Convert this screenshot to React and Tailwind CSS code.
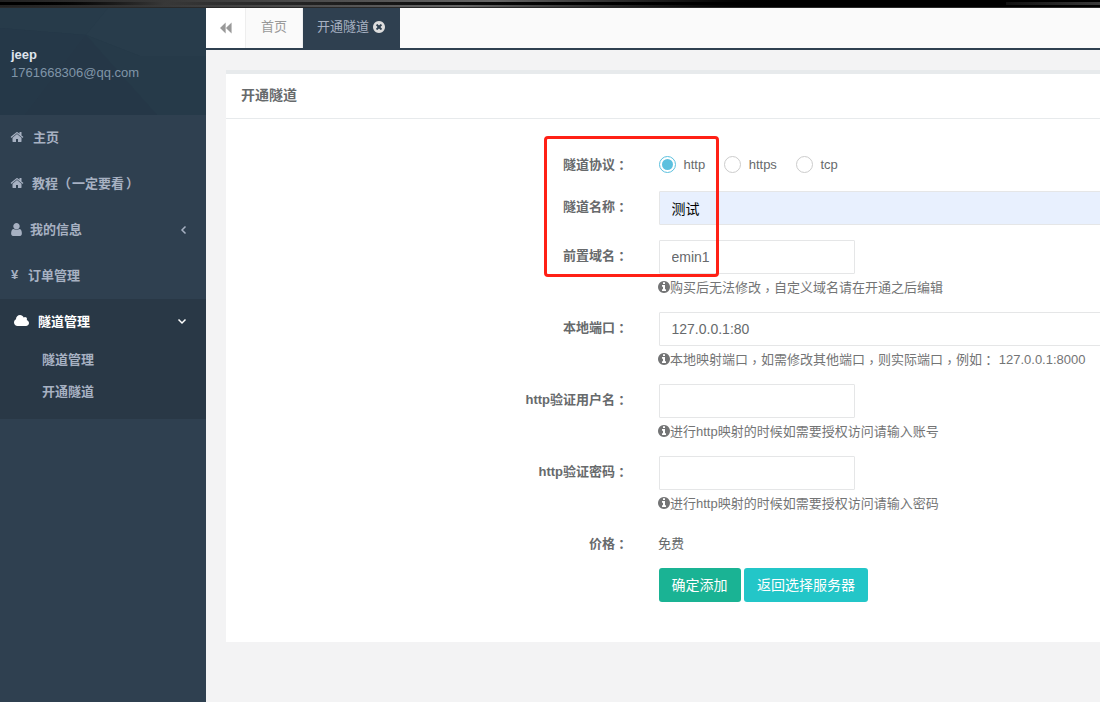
import { useState } from "react";

const icons = {
  home: "M1472 992v480q0 26-19 45t-45 19h-384v-384h-256v384h-384q-26 0-45-19t-19-45v-480q0-1 .5-3t.5-3l575-474 575 474q1 2 1 6zm223-69l-62 74q-8 9-21 11h-3q-13 0-21-7l-692-577-692 577q-12 8-24 7-13-2-21-11l-62-74q-8-10-7-23.5t11-21.5l719-599q32-26 76-26t76 26l244 204v-195q0-14 9-23t23-9h192q14 0 23 9t9 23v408l219 182q10 8 11 21.5t-7 23.5z",
  user: "M1536 1399q0 109-62.5 187t-150.5 78h-854q-88 0-150.5-78t-62.5-187q0-85 8.5-160.5t31.5-152 58.5-131 94-89 134.5-34.5q131 128 313 128t313-128q76 0 134.5 34.5t94 89 58.5 131 31.5 152 8.5 160.5zm-256-887q0 159-112.5 271.5t-271.5 112.5-271.5-112.5-112.5-271.5 112.5-271.5 271.5-112.5 271.5 112.5 112.5 271.5z",
  cloud: "M1856 1152q0 159-112.5 271.5t-271.5 112.5h-1088q-185 0-316.5-131.5t-131.5-316.5q0-132 71-241.5t187-163.5q-2-28-2-43 0-212 150-362t362-150q158 0 286.5 88t187.5 230q70-62 166-62 106 0 181 75t75 181q0 75-41 138 129 30 213 134.5t84 239.5z",
  info: "M1152 1376v-160q0-14-9-23t-23-9h-96v-512q0-14-9-23t-23-9h-320q-14 0-23 9t-9 23v160q0 14 9 23t23 9h96v320h-96q-14 0-23 9t-9 23v160q0 14 9 23t23 9h448q14 0 23-9t9-23zm-128-896v-160q0-14-9-23t-23-9h-192q-14 0-23 9t-9 23v160q0 14 9 23t23 9h192q14 0 23-9t9-23zm640 416q0 209-103 385.5t-279.5 279.5-385.5 103-385.5-103-279.5-279.5-103-385.5 103-385.5 279.5-279.5 385.5-103 385.5 103 279.5 279.5 103 385.5z",
  close: "M1277 1122q0-26-19-45l-181-181 181-181q19-19 19-45 0-27-19-46l-90-90q-19-19-46-19-26 0-45 19l-181 181-181-181q-19-19-45-19-27 0-46 19l-90 90q-19 19-19 46 0 26 19 45l181 181-181 181q-19 19-19 45 0 27 19 46l90 90q19 19 46 19 26 0 45-19l181-181 181 181q19 19 45 19 27 0 46-19l90-90q19-19 19-46zm387-226q0 209-103 385.5t-279.5 279.5-385.5 103-385.5-103-279.5-279.5-103-385.5 103-385.5 279.5-279.5 385.5-103 385.5 103 279.5 279.5 103 385.5z",
  backward: "M850 200v1392L130 896zM1610 200v1392L890 896z",
};

const Icon = ({ name, className, box = "0 0 1792 1792" }) => (
  <svg viewBox={box} fill="currentColor" className={`shrink-0 ${className}`}>
    <path d={icons[name]} />
  </svg>
);

const Chevron = ({ points, className = "" }) => (
  <svg viewBox="0 0 10 10" fill="none" stroke="currentColor" strokeWidth="1.5" className={`ml-auto size-[10px] ${className}`}>
    <polyline points={points} />
  </svg>
);

// Full-width punctuation sits in the middle of its box in the TC font
const Text = ({ children, className = "" }) => (
  <span className={className}>
    {children.split(/([：，])/).map((part, i) =>
      i % 2 ? (
        <span key={i} className={`font-['Noto_Sans_CJK_TC',sans-serif] leading-none ${part === "，" ? "align-[-3px]" : "align-[-1px]"}`}>
          {part}
        </span>
      ) : part
    )}
  </span>
);

function Sidebar() {
  return (
    <aside className="w-[206px] shrink-0 bg-[#2f4050] text-[13px] font-semibold text-[#a7b1c2]">
      <div className="relative h-[107px] bg-[#263949]">
        <svg viewBox="0 0 206 107" className="absolute inset-0 h-full w-full">
          <polygon points="0,0 108,0 86,27 0,20" fill="#273b4a" />
          <polygon points="108,0 206,0 206,48 140,48 86,27" fill="#283c4b" />
          <polygon points="0,20 86,27 25,107 0,107" fill="#253848" />
          <polygon points="86,27 157,107 25,107" fill="#253747" />
          <polygon points="86,27 140,48 206,48 206,107 157,107" fill="#263a49" />
        </svg>
        <div className="relative pt-[38px] pl-[11px]">
          <div className="leading-[18px] font-bold text-[#dfe4ed]">jeep</div>
          <div className="leading-[18px] font-normal text-[#8095a8]">1761668306@qq.com</div>
        </div>
      </div>

      <nav>
        <a className="flex h-[46px] items-center pr-5 pb-[2px] pl-[10px]">
          <Icon name="home" className="mr-[9px] size-[14px]" />
          <span className="pt-[2px]">主页</span>
        </a>
        <a className="flex h-[46px] items-center pr-5 pb-[2px] pl-[10px]">
          <Icon name="home" className="mr-[8px] size-[14px]" />
          <span className="flex pt-[2px]">
            教程<span className="mr-px">（</span>一定要看<span className="pl-[2px]">）</span>
          </span>
        </a>
        <a className="flex h-[46px] items-center pr-[17px] pb-[2px] pl-[9px]">
          <Icon name="user" className="mr-[6px] size-[15px]" />
          <span className="pt-[2px]">我的信息</span>
          <Chevron points="6.5,1.5 3,5 6.5,8.5" className="mt-[2px]" />
        </a>
        <a className="flex h-[46px] items-center pr-5 pb-[2px] pl-[11px]">
          <span className="mr-[9px] w-2 text-[13px] font-bold">¥</span>
          <span className="pt-[2px]">订单管理</span>
        </a>

        {/* Open group */}
        <div className="h-[120px] bg-[#293846]">
          <a className="flex h-[46px] items-center pr-[19px] pb-[2px] pl-[14px] text-white">
            <Icon name="cloud" box="-64 0 1920 1792" className="mr-[9px] h-[14px] w-[15px]" />
            <span className="pt-[2px]">隧道管理</span>
            <Chevron points="1.5,3.5 5,7 8.5,3.5" />
          </a>
          <a className="block h-8 pl-[42px] leading-[30px]">隧道管理</a>
          <a className="block h-8 pl-[42px] leading-[30px]">开通隧道</a>
        </div>
      </nav>
    </aside>
  );
}

function Tabs() {
  return (
    <div className="flex h-[42px] border-b-2 border-[#2f4050] bg-[#fafafa] text-[13px] leading-[38px] text-[#999999]">
      <button className="flex w-10 items-center justify-center border-r border-[#eeeeee] bg-white">
        <Icon name="backward" className="size-[14px]" />
      </button>
      <a className="w-[57px] border-r border-[#eeeeee] text-center">首页</a>
      <a className="flex w-[97px] items-center bg-[#2f4050] pb-[2px] pl-[14px] text-[#a7b1c2]">
        <span>开通隧道</span>
        <Icon name="close" className="ml-[3px] size-[14px] text-[#dddddd]" />
      </a>
    </div>
  );
}

const Field = ({ label, labelClass = "", className = "", children }) => (
  <div className={`flex ${className}`}>
    <label className={`w-[402px] shrink-0 text-right leading-[18px] font-bold ${labelClass}`}>
      {label && <Text>{label}</Text>}
    </label>
    <div className="ml-[31px] shrink-0">{children}</div>
  </div>
);

const Help = ({ children }) => (
  <p className="mt-1 -ml-[2px] flex h-[18px] items-center whitespace-pre text-[#737475]">
    <Icon name="info" className="size-[14px]" />
    <Text className="-ml-px pt-[2px]">{children}</Text>
  </p>
);

const inputClass = "block h-[34px] rounded-[1px] border border-[#e5e6e7] px-[11.5px] text-[14px] outline-none";

function TunnelForm() {
  const [protocol, setProtocol] = useState("http");

  return (
    <form className="relative h-[523px] pt-9" onSubmit={(e) => e.preventDefault()}>
      <Field label="隧道协议：" labelClass="pt-px" className="h-9">
        <div className="flex h-[18px] items-center">
          {["http", "https", "tcp"].map((p) => (
            <label key={p} className="mr-[19px] flex items-center gap-[7.5px]" onClick={() => setProtocol(p)}>
              <span className={`flex size-[17px] items-center justify-center rounded-full border ${protocol === p ? "border-[#5bc0de]" : "border-[#cccccc]"}`}>
                {protocol === p && <span className="size-[11px] rounded-full bg-[#5bc0de]" />}
              </span>
              <span className="pt-[2px]">{p}</span>
            </label>
          ))}
        </div>
      </Field>
      <Field label="隧道名称：" labelClass="pt-[7px]" className="h-[49px]">
        <input className={`${inputClass} w-[590px] bg-[#e8f0fe] text-black`} defaultValue="测试" />
      </Field>
      <Field label="前置域名：" labelClass="pt-[7px]" className="h-[72px]">
        <input className={`${inputClass} w-[196px]`} defaultValue="emin1" />
        <Help>购买后无法修改，自定义域名请在开通之后编辑</Help>
      </Field>
      <Field label="本地端口：" labelClass="pt-[7px]" className="h-[72px]">
        <input className={`${inputClass} w-[590px]`} defaultValue="127.0.0.1:80" />
        <Help>本地映射端口，如需修改其他端口，则实际端口，例如： 127.0.0.1:8000</Help>
      </Field>
      <Field label="http验证用户名：" labelClass="pt-[7px]" className="h-[72px]">
        <input className={`${inputClass} w-[196px]`} />
        <Help>进行http映射的时候如需要授权访问请输入账号</Help>
      </Field>
      <Field label="http验证密码：" labelClass="pt-[7px]" className="h-[72px]">
        <input className={`${inputClass} w-[196px]`} type="password" />
        <Help>进行http映射的时候如需要授权访问请输入密码</Help>
      </Field>
      <Field label="价格：" labelClass="pt-[7px]" className="h-10">
        <div className="-ml-px pt-[7px] leading-[18px]">免费</div>
      </Field>
      <Field label="">
        <div className="flex gap-[3px] text-[14px] text-white">
          <button className="h-[34px] w-[82px] rounded-[3px] bg-[#1ab394] pr-px">确定添加</button>
          <button className="h-[34px] w-[124px] rounded-[3px] bg-[#23c6c8]">返回选择服务器</button>
        </div>
      </Field>

      <div className="pointer-events-none absolute top-[17px] left-[318px] h-[141px] w-[175px] rounded-[4px] border-3 border-[#ff2015]" />
    </form>
  );
}

function TopStrip() {
  return (
    <div className="flex h-2 shrink-0 flex-col border-b border-[#292929]">
      <div className="h-[2px] bg-linear-to-r from-[#222222] via-[#666666] via-45% to-black to-72%" />
      <div className="flex h-[3px] justify-end bg-linear-to-r from-black from-2% via-[#383838] via-15% to-black to-65%">
        <div className="w-[94px] bg-linear-to-r from-[#111111] to-[#3a3a3a]" />
      </div>
      <div className="h-[2px] bg-linear-to-r from-[#222222] via-[#666666] via-42% to-black to-72%" />
    </div>
  );
}

export default function App() {
  return (
    <div className="flex h-[702px] w-[1100px] flex-col overflow-hidden font-['Liberation_Sans','Noto_Sans_CJK_SC',sans-serif] text-[13px] text-[#676a6c]">
      <TopStrip />
      <div className="flex min-h-0 flex-1">
        <Sidebar />
        <main className="min-w-0 flex-1 bg-[#f3f3f4]">
          <Tabs />
          <section className="mt-5 ml-5 border-t-4 border-[#e7eaec] bg-white">
            <h5 className="h-[45px] border-b border-[#e7eaec] pl-[15px] text-[14px] leading-[42px] font-semibold">开通隧道</h5>
            <TunnelForm />
          </section>
        </main>
      </div>
    </div>
  );
}
